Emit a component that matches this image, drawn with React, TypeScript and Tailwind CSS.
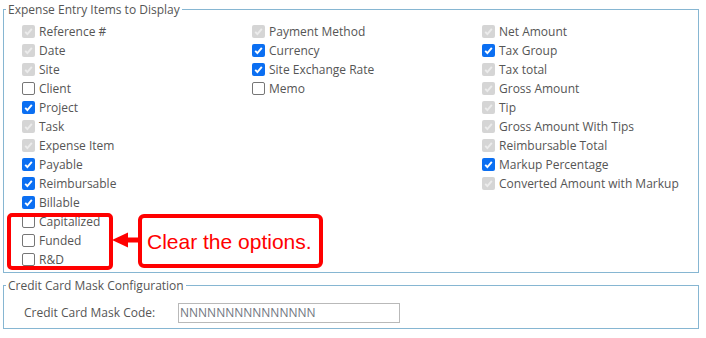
type State = "disabled" | "checked" | "unchecked";

type Item = { label: string; state: State };

const COLUMNS: Item[][] = [
  [
    { label: "Reference #", state: "disabled" },
    { label: "Date", state: "disabled" },
    { label: "Site", state: "disabled" },
    { label: "Client", state: "unchecked" },
    { label: "Project", state: "checked" },
    { label: "Task", state: "disabled" },
    { label: "Expense Item", state: "disabled" },
    { label: "Payable", state: "checked" },
    { label: "Reimbursable", state: "checked" },
    { label: "Billable", state: "checked" },
    { label: "Capitalized", state: "unchecked" },
    { label: "Funded", state: "unchecked" },
    { label: "R&D", state: "unchecked" },
  ],
  [
    { label: "Payment Method", state: "disabled" },
    { label: "Currency", state: "checked" },
    { label: "Site Exchange Rate", state: "checked" },
    { label: "Memo", state: "unchecked" },
  ],
  [
    { label: "Net Amount", state: "disabled" },
    { label: "Tax Group", state: "checked" },
    { label: "Tax total", state: "disabled" },
    { label: "Gross Amount", state: "disabled" },
    { label: "Tip", state: "disabled" },
    { label: "Gross Amount With Tips", state: "disabled" },
    { label: "Reimbursable Total", state: "disabled" },
    { label: "Markup Percentage", state: "checked" },
    { label: "Converted Amount with Markup", state: "disabled" },
  ],
];

function Box({ state }: { state: State }) {
  if (state === "unchecked") {
    return <span className="block w-[13px] h-[13px] rounded-[2px] border border-[#767676] bg-white" />;
  }
  const bg = state === "checked" ? "bg-[#0b6ff2]" : "bg-[#d5d5d5]";
  const stroke = state === "checked" ? "#ffffff" : "#ececec";
  return (
    <span className={`flex items-center justify-center w-[13px] h-[13px] rounded-[2px] ${bg}`}>
      <svg width="11" height="11" viewBox="0 0 11 11">
        <path d="M2.2 5.8 L4.4 8 L8.8 2.8" fill="none" stroke={stroke} strokeWidth="1.9" />
      </svg>
    </span>
  );
}

function Option({ item }: { item: Item }) {
  return (
    <div className="flex items-center h-[19px] gap-[4px]">
      <Box state={item.state} />
      <span className="text-[#555555]">{item.label}</span>
    </div>
  );
}

export default function App() {
  return (
    <div className="relative w-[706px] h-[338px] bg-white text-[12px] overflow-hidden" style={{ fontFamily: '"Open Sans", "DejaVu Sans", sans-serif' }}>
      <fieldset className="ml-[3px] mr-[7px] border border-[#86b6d2] pl-[2px] pt-[3px] pb-[3px]">
        <legend className="px-[2px] leading-[19px] text-[#555555]">Expense Entry Items to Display</legend>
        <div className="grid grid-cols-[230px_230px_1fr] ml-[16px]">
          {COLUMNS.map((col, i) => (
            <div key={i} className="flex flex-col">
              {col.map((item) => (
                <Option key={item.label} item={item} />
              ))}
            </div>
          ))}
        </div>
      </fieldset>

      <fieldset className="mt-[3px] ml-[3px] mr-[7px] border border-[#86b6d2] pl-[2px] pt-[8px] pb-[5px]">
        <legend className="px-[2px] leading-[19px] text-[#555555]">Credit Card Mask Configuration</legend>
        <div className="flex items-center ml-[18px] h-[20px]">
          <span className="w-[154px] text-[#555555]">Credit Card Mask Code:</span>
          <div className="w-[222px] h-[20px] border border-[#b9b9b9] flex items-center pl-[1px] text-[#6f7680]">
            NNNNNNNNNNNNNNN
          </div>
        </div>
      </fieldset>

      {/* annotation */}
      <div className="absolute left-[7px] top-[213px] w-[106px] h-[57px] border-[4px] border-[#ff0000] rounded-[5px]" />
      <svg className="absolute left-[110px] top-[230px]" width="30" height="20" viewBox="0 0 30 20">
        <polygon points="2,10 18,2.5 18,17.5" fill="#ff0000" />
        <rect x="17" y="7.5" width="13" height="5" fill="#ff0000" />
      </svg>
      <div
        className="absolute left-[138px] top-[214px] w-[185px] h-[54px] border-[4px] border-[#ff0000] rounded-[6px] bg-white flex items-center pl-[5px] text-[21px] text-[#ff0000] leading-none"
        style={{ fontFamily: '"Liberation Sans", Arial, sans-serif' }}
      >
        Clear the options.
      </div>
    </div>
  );
}
